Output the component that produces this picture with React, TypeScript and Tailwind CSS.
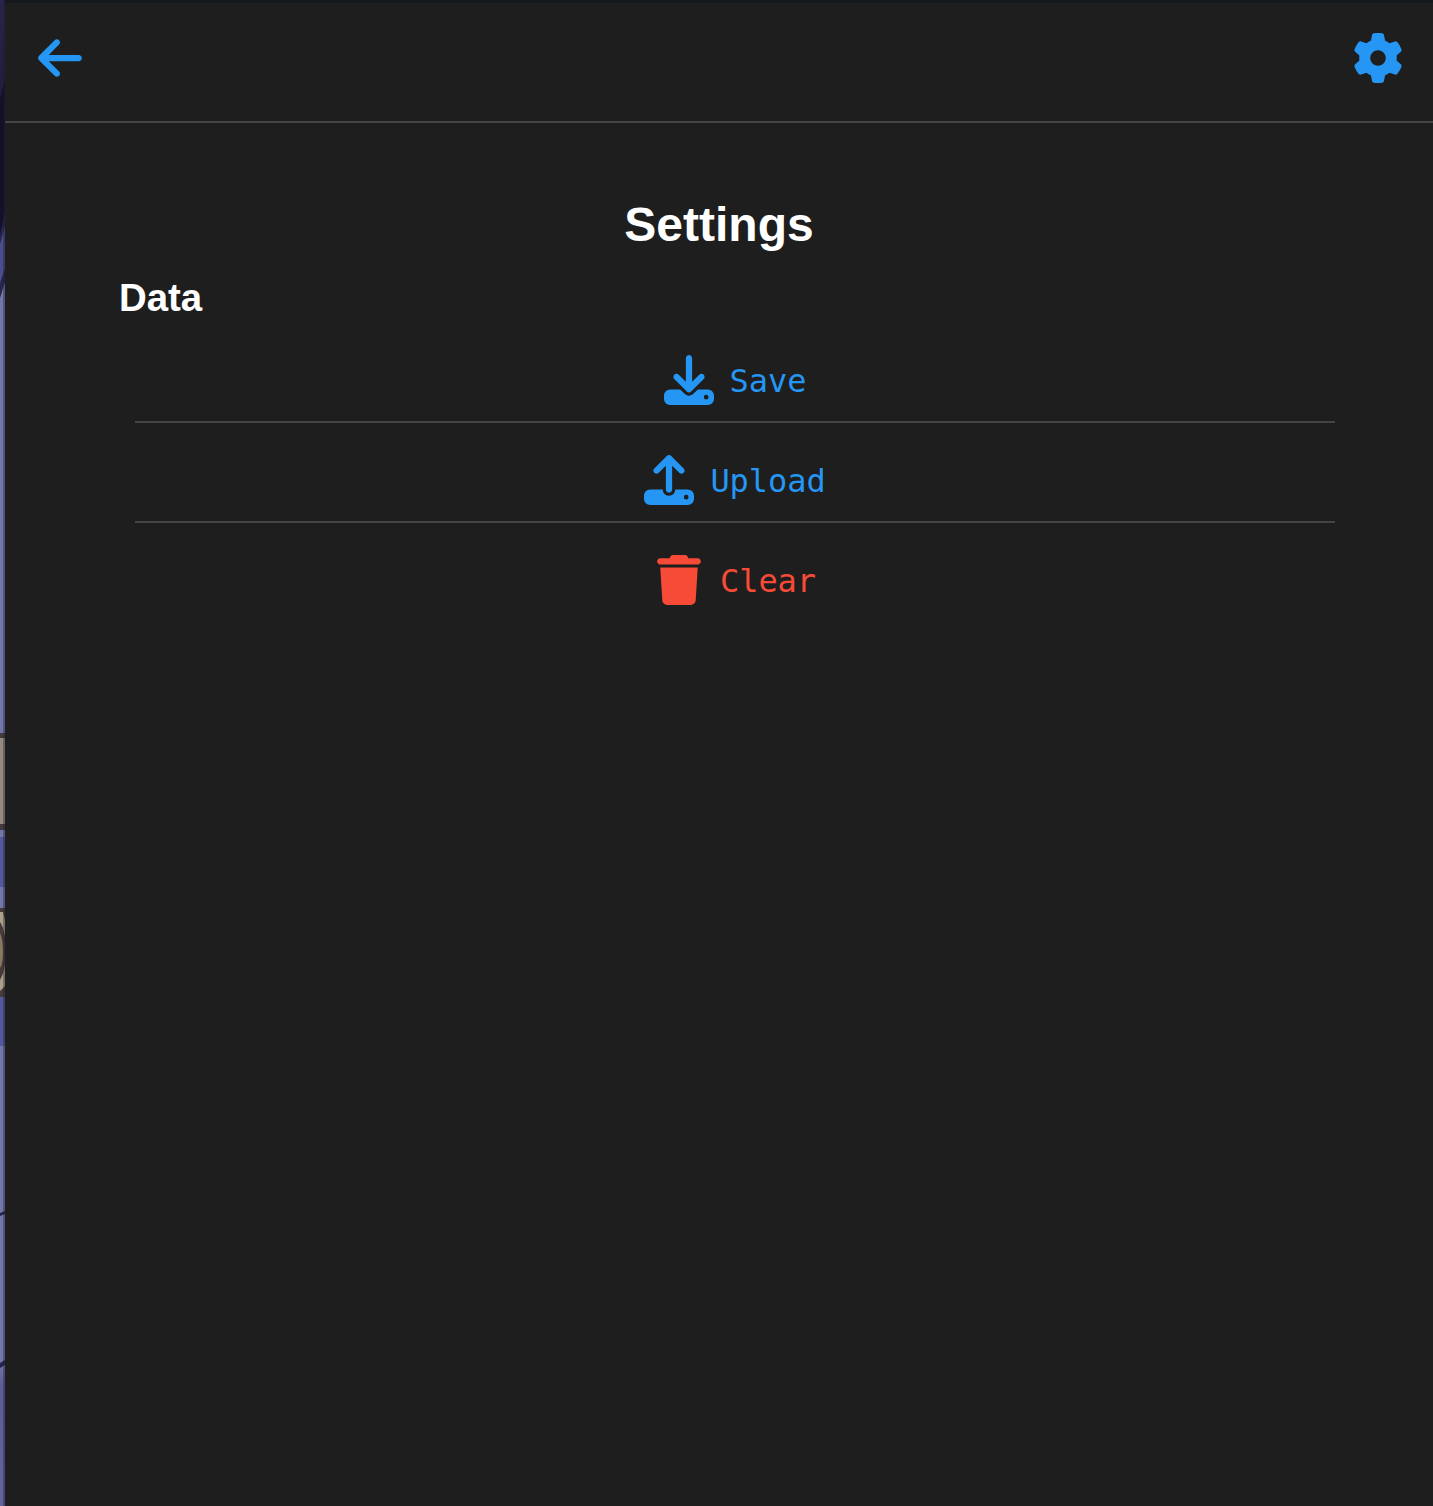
import type { ReactNode } from "react";
import { FaArrowLeft, FaDownload, FaGear, FaTrash, FaUpload } from "react-icons/fa6";

function Wallpaper() {
  return (
    <svg className="block h-[1506px] w-[5px] shrink-0" viewBox="0 0 5 1506" preserveAspectRatio="none" aria-hidden="true">
      <defs>
        <linearGradient id="night" x1="0" y1="0" x2="0" y2="1">
          <stop offset="0" stopColor="#28254a" />
          <stop offset="1" stopColor="#211c3b" />
        </linearGradient>
        <linearGradient id="dusk" x1="0" y1="0" x2="0" y2="1">
          <stop offset="0" stopColor="#7275a5" />
          <stop offset="0.15" stopColor="#5c5c99" />
          <stop offset="1" stopColor="#62639f" />
        </linearGradient>
      </defs>
      <rect width="5" height="1506" fill="#7376a8" />
      <rect width="5" height="100" fill="url(#night)" />
      <path d="M0 98 5 80V230L0 245Z" fill="#15102a" />
      <path d="M0 242 5 224V268L0 285Z" fill="#4c4d8d" />
      <path d="M0 235 5 212V226L0 244ZM0 283 5 268V282L0 298Z" fill="#26254d" />
      <rect y="733" width="5" height="97" fill="#463b3c" />
      <rect y="738" width="5" height="86" fill="#958a80" />
      <rect y="837" width="5" height="50" fill="#55589a" />
      <rect y="908" width="5" height="89" fill="#463b3a" />
      <path d="M0 912H3L5 920V936Q3 926 0 922Z" fill="#aaa18a" />
      <path d="M0 933Q3 940 3 952T0 968Z" fill="#8a775f" />
      <path d="M0 980Q4 973 5 964V986L0 991Z" fill="#aaa18a" />
      <rect y="997" width="5" height="49" fill="#55589a" />
      <path d="M0 1213 5 1211V1214L0 1216Z" fill="#24244c" />
      <rect y="1364" width="5" height="142" fill="url(#dusk)" />
      <path d="M0 1363 5 1360V1365L0 1368Z" fill="#24244c" />
      <rect x="3" width="2" height="1506" fill="#1e1e30" opacity="0.38" />
    </svg>
  );
}

function Action({ icon, label, className }: { icon: ReactNode; label: string; className: string }) {
  return (
    <button
      className={`flex h-[98px] w-full items-center justify-center gap-4 pt-4 font-['DejaVu_Sans_Mono',monospace] text-[32px] leading-[50px] tracking-[-0.07px] ${className}`}
    >
      <span className="flex size-[50px] items-center justify-center">{icon}</span>
      <span className="pt-0.5">{label}</span>
    </button>
  );
}

export default function App() {
  return (
    <div className="flex h-[1506px] w-[1433px] overflow-hidden bg-[#1e1e1e] font-['Liberation_Sans',Arial,sans-serif] text-white">
      <Wallpaper />
      <div className="flex min-w-0 grow flex-col border-t-[3px] border-[#14181e]">
        <header className="flex h-[120px] items-center justify-between border-b-2 border-[#444] px-[30px] pb-2">
          <button aria-label="Back" className="flex size-[50px] items-center justify-center text-[#2596f3]">
            <FaArrowLeft size={50} />
          </button>
          <button aria-label="Settings" className="flex size-[50px] items-center justify-center text-[#2596f3]">
            <FaGear size={50} />
          </button>
        </header>
        <main className="flex flex-col px-[114px] pt-[74px]">
          <h1 className="text-center text-[48px] leading-[55px] font-bold">Settings</h1>
          <h2 className="mt-[24px] text-[38.4px] leading-[44px] font-bold">Data</h2>
          <ul className="mt-[3px] ml-4 flex w-[1200px] flex-col">
            <li className="border-b-2 border-[#444]">
              <Action icon={<FaDownload size={50} />} label="Save" className="text-[#2596f3]" />
            </li>
            <li className="border-b-2 border-[#444]">
              <Action icon={<FaUpload size={50} />} label="Upload" className="text-[#2596f3]" />
            </li>
            <li>
              <Action icon={<FaTrash size={50} />} label="Clear" className="text-[#f84b37]" />
            </li>
          </ul>
        </main>
      </div>
    </div>
  );
}
